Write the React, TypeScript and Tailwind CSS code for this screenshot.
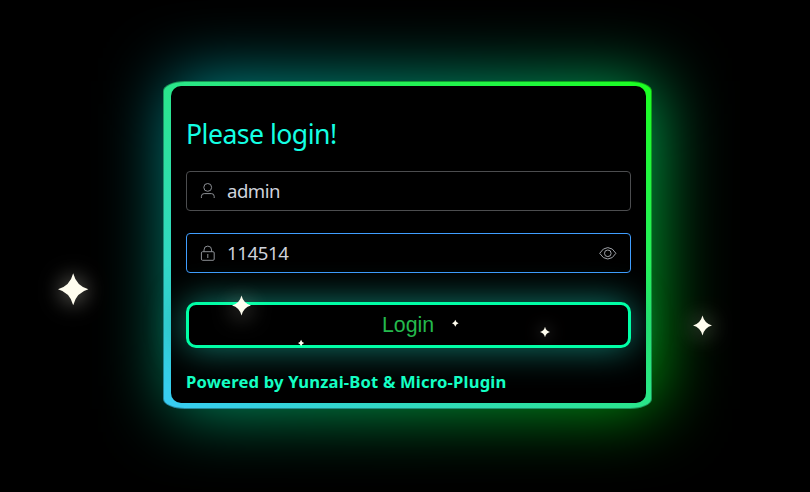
type Star = { x: number; y: number; r: number; glow: string };

const stars: Star[] = [
  { x: 73, y: 289.6, r: 15.2, glow: 'drop-shadow-[0_1px_11px_rgba(255,253,239,0.6)]' },
  { x: 241.5, y: 305, r: 9.5, glow: 'drop-shadow-[0_3px_11px_rgba(255,253,239,0.6)]' },
  { x: 702.5, y: 325, r: 9.5, glow: 'drop-shadow-[0_1px_11px_rgba(255,253,239,0.6)]' },
  { x: 545, y: 331.5, r: 5, glow: 'drop-shadow-[0_0_8px_rgba(255,253,239,0.5)]' },
  { x: 455, y: 323.4, r: 3.3, glow: 'drop-shadow-none' },
  { x: 301, y: 343.5, r: 3.1, glow: 'drop-shadow-none' },
];

function Sparkle({ x, y, r, glow }: Star) {
  return (
    <svg
      viewBox="-10 -10 20 20"
      className={`absolute overflow-visible ${glow}`}
      style={{ left: x - r, top: y - r, width: r * 2, height: r * 2 }}
    >
      <path d="M0-10.5Q2.1-2.1 10 0Q2.1 2.1 0 10.5Q-2.1 2.1-10 0Q-2.1-2.1 0-10.5Z" fill="#fffdef" />
    </svg>
  );
}

function UserIcon() {
  return (
    <svg viewBox="0 0 16 16" className="h-4 w-4" fill="none" stroke="#8d9095" strokeWidth="1">
      <circle cx="7.7" cy="4.4" r="3.9" />
      <path d="M1.4 15V13.4Q1.4 10.6 4.2 10.6H11.4Q14.2 10.6 14.2 13.4V15" />
    </svg>
  );
}

function LockIcon() {
  return (
    <svg viewBox="0 0 16 16" className="h-4 w-4" fill="none" stroke="#8d9095" strokeWidth="1">
      <rect x="1.4" y="6.7" width="12.8" height="8.6" rx="1.2" />
      <path d="M4 6.7V4.9A3.8 3.8 0 0 1 11.6 4.9V6.7M7.8 9V13" />
    </svg>
  );
}

function EyeIcon() {
  return (
    <svg viewBox="0 0 18 14" className="h-[14px] w-[18px]" fill="none" stroke="#a0a3a9" strokeWidth="1">
      <path d="M.7 7.3Q4 1.6 8.8 1.6T16.9 7.3Q13.7 13 8.8 13T.7 7.3Z" />
      <circle cx="8.8" cy="7.3" r="3.3" />
    </svg>
  );
}

export default function App() {
  return (
    <main className="relative h-[492px] w-[810px] overflow-hidden bg-black pt-[81px] pl-[163px] font-['Noto_Sans','Segoe_UI',sans-serif]">
      <div className="relative h-[327.5px] w-[489px]">
        <div className="absolute inset-y-0 left-[9px] -right-[6px] bg-[linear-gradient(135deg,#0096a4_0%,#009a76_35%,#00a650_62%,#00a408_95%)] blur-[35px]" />
        <section className="relative h-full w-full rounded-[22px/10px] border border-black/35 bg-[linear-gradient(to_top_right,#38ccf5,#1cff20)] bg-origin-border pt-[4px] pl-[7px]">
          <div className="flex h-[317px] w-[475px] flex-col rounded-[10px] bg-black px-[15px] pt-[30px]">
            <h1 className="h-[55px] text-[26.6px] leading-9 tracking-[-0.52px] text-[#14ffe4]">Please login!</h1>
            <div className="flex h-10 w-[445px] items-center rounded-[4px] border border-[#4c4d4f] pl-[13px]">
              <UserIcon />
              <span className="ml-[11px] text-[18.6px] leading-6 tracking-[-0.5px] text-[#cfd3dc]">admin</span>
            </div>
            <div className="mt-[22px] flex h-10 w-[445px] items-center rounded-[4px] border border-[#409eff] pr-[13px] pl-[13px]">
              <LockIcon />
              <span className="ml-[11px] flex-1 text-[18.6px] leading-6 tracking-[-0.4px] text-[#cfd3dc]">114514</span>
              <EyeIcon />
            </div>
            <button className="mt-[29px] h-[46px] w-[445px] shrink-0 rounded-[10px] border-[3px] border-[#00ffa6] bg-black pt-[2px] pr-[1px] font-['Liberation_Sans',Arial,sans-serif] text-[21.3px] text-[#24b94d] shadow-[0_0_36px_rgba(20,140,125,0.9)]">
              Login
            </button>
            <p className="mt-[22px] text-[16.6px] leading-6 font-bold tracking-[0.18px] whitespace-nowrap text-[#14ffc4]">
              Powered by Yunzai-Bot &amp; Micro-Plugin
            </p>
          </div>
        </section>
      </div>
      {stars.map((star) => (
        <Sparkle key={star.x} {...star} />
      ))}
    </main>
  );
}
